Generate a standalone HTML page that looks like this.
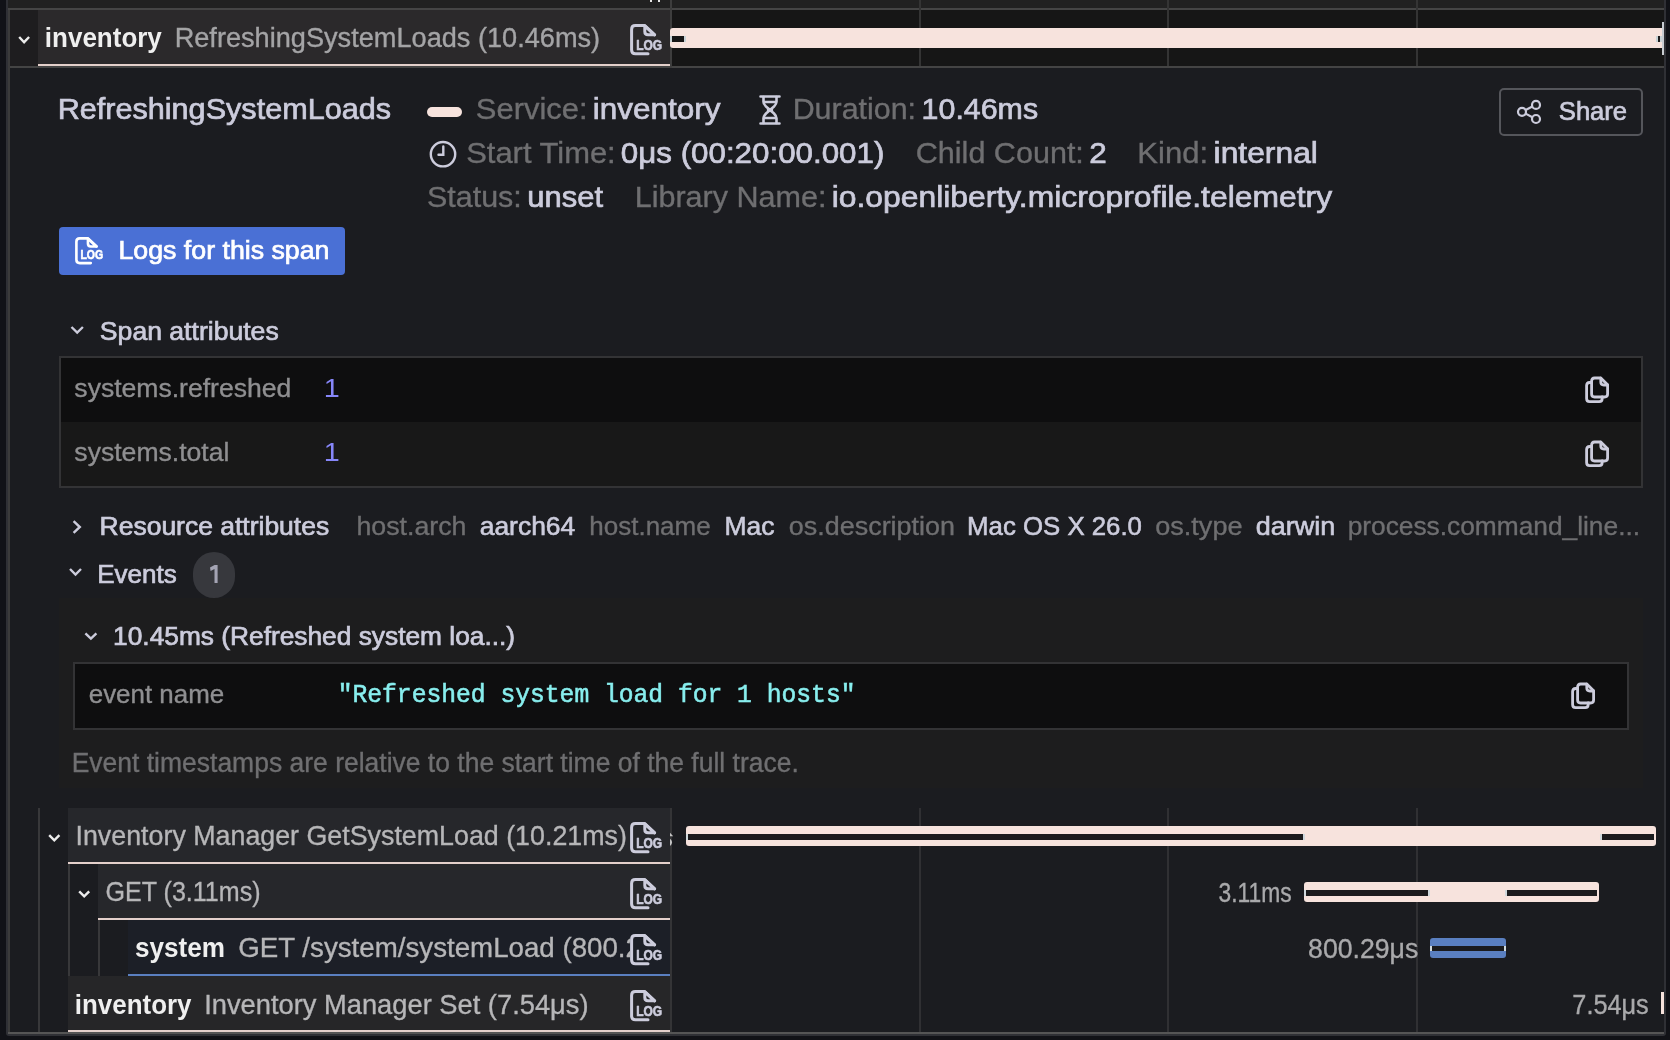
<!DOCTYPE html>
<html><head><meta charset="utf-8"><style>
html,body{margin:0;padding:0;background:#111217;overflow:hidden}
svg{display:block;will-change:transform}
</style></head><body>
<svg width="1670" height="1040" viewBox="0 0 1670 1040">
<rect x="0" y="0" width="1670" height="1040" fill="#111217" />
<rect x="6" y="-10" width="1660" height="1046" fill="#2f3035" rx="3" />
<rect x="8" y="0" width="1656" height="1034" fill="#1b1c20" />
<rect x="8" y="0" width="1656" height="8" fill="#212121" />
<rect x="8" y="10" width="2" height="1024" fill="#3b3b3b" />
<rect x="8" y="8" width="1656" height="2" fill="#454545" />
<rect x="10" y="66" width="1654" height="2" fill="#444444" />
<rect x="8" y="1032" width="1656" height="2" fill="#555555" />
<rect x="10" y="10" width="28" height="56" fill="#1e1d1f" />
<rect x="38" y="10" width="632" height="56" fill="#2b292b" />
<rect x="38" y="64" width="632" height="2" fill="#e4d0cb" />
<rect x="672" y="10" width="992" height="56" fill="#161616" />
<rect x="670" y="0" width="2" height="68" fill="#3d3d3d" />
<rect x="919" y="0" width="2" height="66" fill="#343434" />
<rect x="1167" y="0" width="2" height="66" fill="#343434" />
<rect x="1416" y="0" width="2" height="66" fill="#343434" />
<path d="M673 28 H1662 V48 H673 Q670 48 670 45 V31 Q670 28 673 28 Z" fill="#f7e3dd"/>
<rect x="670" y="36" width="2" height="6" fill="#c9d3d6" />
<rect x="672" y="36" width="12" height="6" fill="#161616" />
<rect x="684" y="36" width="2" height="6" fill="#c9d3d6" />
<rect x="1656" y="36" width="2" height="6" fill="#c9d3d6" />
<rect x="1658" y="36" width="2" height="6" fill="#1d1d1d" />
<rect x="1660" y="36" width="2" height="6" fill="#c9d3d6" />
<rect x="1662" y="22" width="2" height="33" fill="#c9cdd2" />
<rect x="650" y="0" width="2" height="2" fill="#e8e8e8" />
<rect x="658" y="0" width="2" height="2" fill="#e8e8e8" />
<path d="M19.2 37 L24.1 42.2 L29.1 37" fill="none" stroke="#ececec" stroke-width="2.4"/>
<text x="44.87" y="47.10" font-family="Liberation Sans" font-weight="bold" font-size="27" fill="#efefef" textLength="116.97" lengthAdjust="spacingAndGlyphs">inventory</text>
<text x="174.66" y="47.10" font-family="Liberation Sans" font-weight="normal" font-size="26.8" fill="#a4a4a6" stroke="#a4a4a6" stroke-width="0.35" textLength="425.51" lengthAdjust="spacingAndGlyphs">RefreshingSystemLoads (10.46ms)</text>
<g transform="translate(630,24) scale(1.0)" fill="none" stroke="#ccccdc" stroke-width="3" stroke-linecap="round" stroke-linejoin="round"><path d="M18 29.8 H5.5 Q1.6 29.8 1.6 26 V5.4 Q1.6 1.6 5.4 1.6 H14.8 L24.6 10.8"/><path d="M14.8 1.8 V7.5 Q14.8 10.8 18 10.8 H24.6 Z"/><text x="6.2" y="25.6" fill="#ccccdc" font-family="Liberation Sans" font-weight="bold" font-size="15" stroke="#ccccdc" stroke-width="0.7" textLength="26" lengthAdjust="spacingAndGlyphs">LOG</text></g>
<text x="57.65" y="118.60" font-family="Liberation Sans" font-weight="normal" font-size="29.5" fill="#ccccdc" stroke="#ccccdc" stroke-width="0.7" textLength="333.39" lengthAdjust="spacingAndGlyphs">RefreshingSystemLoads</text>
<rect x="427" y="107" width="35" height="10" fill="#f7e3dd" rx="5" />
<text x="475.87" y="118.70" font-family="Liberation Sans" font-weight="normal" font-size="29.5" fill="#6f6f71" stroke="#6f6f71" stroke-width="0.35" textLength="111.74" lengthAdjust="spacingAndGlyphs">Service:</text>
<text x="592.73" y="118.70" font-family="Liberation Sans" font-weight="normal" font-size="29.5" fill="#ccccdc" stroke="#ccccdc" stroke-width="0.7" textLength="127.89" lengthAdjust="spacingAndGlyphs">inventory</text>
<g fill="none" stroke="#ccccdc" stroke-width="2.6" stroke-linecap="round" stroke-linejoin="round"><path d="M760.5 96.5 H779.5 M760.5 123.5 H779.5"/><path d="M763.5 97 V101.5 Q763.5 104 766 106.5 L770 110 L774 106.5 Q776.5 104 776.5 101.5 V97"/><path d="M763.5 123 V118.5 Q763.5 116 766 113.5 L770 110 L774 113.5 Q776.5 116 776.5 118.5 V123"/><path d="M764 102 H776 M768 110 H772 M764 118 H776"/></g>
<text x="792.68" y="118.70" font-family="Liberation Sans" font-weight="normal" font-size="29.5" fill="#6f6f71" stroke="#6f6f71" stroke-width="0.35" textLength="123.34" lengthAdjust="spacingAndGlyphs">Duration:</text>
<text x="921.64" y="118.70" font-family="Liberation Sans" font-weight="normal" font-size="29.5" fill="#ccccdc" stroke="#ccccdc" stroke-width="0.7" textLength="116.46" lengthAdjust="spacingAndGlyphs">10.46ms</text>
<g fill="none" stroke="#ccccdc" stroke-width="2.4" stroke-linecap="round"><circle cx="443" cy="154.2" r="12.2"/><path d="M443.3 146.5 V154.8 H438.5"/></g>
<text x="466.16" y="163.00" font-family="Liberation Sans" font-weight="normal" font-size="29.5" fill="#6f6f71" stroke="#6f6f71" stroke-width="0.35" textLength="149.57" lengthAdjust="spacingAndGlyphs">Start Time:</text>
<text x="620.89" y="163.00" font-family="Liberation Sans" font-weight="normal" font-size="29.5" fill="#ccccdc" stroke="#ccccdc" stroke-width="0.7" textLength="263.45" lengthAdjust="spacingAndGlyphs">0μs (00:20:00.001)</text>
<text x="915.80" y="163.00" font-family="Liberation Sans" font-weight="normal" font-size="29.5" fill="#6f6f71" stroke="#6f6f71" stroke-width="0.35" textLength="168.06" lengthAdjust="spacingAndGlyphs">Child Count:</text>
<text x="1089.23" y="163.00" font-family="Liberation Sans" font-weight="normal" font-size="29.5" fill="#ccccdc" stroke="#ccccdc" stroke-width="0.7" textLength="17.50" lengthAdjust="spacingAndGlyphs">2</text>
<text x="1137.35" y="163.00" font-family="Liberation Sans" font-weight="normal" font-size="29.5" fill="#6f6f71" stroke="#6f6f71" stroke-width="0.35" textLength="70.80" lengthAdjust="spacingAndGlyphs">Kind:</text>
<text x="1213.59" y="163.00" font-family="Liberation Sans" font-weight="normal" font-size="29.5" fill="#ccccdc" stroke="#ccccdc" stroke-width="0.7" textLength="104.34" lengthAdjust="spacingAndGlyphs">internal</text>
<text x="427.01" y="207.20" font-family="Liberation Sans" font-weight="normal" font-size="29.5" fill="#6f6f71" stroke="#6f6f71" stroke-width="0.35" textLength="94.78" lengthAdjust="spacingAndGlyphs">Status:</text>
<text x="527.29" y="207.20" font-family="Liberation Sans" font-weight="normal" font-size="29.5" fill="#ccccdc" stroke="#ccccdc" stroke-width="0.7" textLength="75.80" lengthAdjust="spacingAndGlyphs">unset</text>
<text x="634.69" y="207.20" font-family="Liberation Sans" font-weight="normal" font-size="29.5" fill="#6f6f71" stroke="#6f6f71" stroke-width="0.35" textLength="191.71" lengthAdjust="spacingAndGlyphs">Library Name:</text>
<text x="831.74" y="207.20" font-family="Liberation Sans" font-weight="normal" font-size="29.5" fill="#ccccdc" stroke="#ccccdc" stroke-width="0.7" textLength="500.33" lengthAdjust="spacingAndGlyphs">io.openliberty.microprofile.telemetry</text>
<rect x="1500" y="89" width="142" height="46" rx="4" fill="none" stroke="#55565b" stroke-width="2"/>
<g fill="none" stroke="#ccccdc" stroke-width="2.2"><circle cx="1536" cy="104.9" r="4"/><circle cx="1522" cy="111.8" r="4"/><circle cx="1536" cy="119" r="4"/><path d="M1525.6 110 L1532.4 106.6 M1525.6 113.6 L1532.4 117.2"/></g>
<text x="1558.84" y="120.00" font-family="Liberation Sans" font-weight="normal" font-size="25.5" fill="#ccccdc" stroke="#ccccdc" stroke-width="0.7" textLength="68.23" lengthAdjust="spacingAndGlyphs">Share</text>
<rect x="59" y="227" width="286" height="48" fill="#4a70d5" rx="4" />
<g transform="translate(75,237) scale(0.875)" fill="none" stroke="#ffffff" stroke-width="3" stroke-linecap="round" stroke-linejoin="round"><path d="M18 29.8 H5.5 Q1.6 29.8 1.6 26 V5.4 Q1.6 1.6 5.4 1.6 H14.8 L24.6 10.8"/><path d="M14.8 1.8 V7.5 Q14.8 10.8 18 10.8 H24.6 Z"/><text x="6.2" y="25.6" fill="#ffffff" font-family="Liberation Sans" font-weight="bold" font-size="15" stroke="#ffffff" stroke-width="0.7" textLength="26" lengthAdjust="spacingAndGlyphs">LOG</text></g>
<text x="118.47" y="259.00" font-family="Liberation Sans" font-weight="normal" font-size="25.6" fill="#ffffff" stroke="#ffffff" stroke-width="0.7" textLength="210.98" lengthAdjust="spacingAndGlyphs">Logs for this span</text>
<path d="M71.5 327 L77.2 332.6 L82.9 327" fill="none" stroke="#ccccdc" stroke-width="2.4"/>
<text x="99.87" y="340.20" font-family="Liberation Sans" font-weight="normal" font-size="26.4" fill="#ccccdc" stroke="#ccccdc" stroke-width="0.7" textLength="178.85" lengthAdjust="spacingAndGlyphs">Span attributes</text>
<rect x="59" y="356" width="1584" height="132" fill="#333335" />
<rect x="61" y="358" width="1580" height="64" fill="#0e0e0f" />
<rect x="61" y="422" width="1580" height="64" fill="#181818" />
<text x="74.36" y="397.20" font-family="Liberation Sans" font-weight="normal" font-size="25.8" fill="#8f8f91" stroke="#8f8f91" stroke-width="0.35" textLength="216.88" lengthAdjust="spacingAndGlyphs">systems.refreshed</text>
<text x="323.80" y="397.20" font-family="Liberation Sans" font-weight="normal" font-size="26.5" fill="#8686f8" textLength="16.03" lengthAdjust="spacingAndGlyphs">1</text>
<text x="74.35" y="461.20" font-family="Liberation Sans" font-weight="normal" font-size="25.8" fill="#8f8f91" stroke="#8f8f91" stroke-width="0.35" textLength="155.11" lengthAdjust="spacingAndGlyphs">systems.total</text>
<text x="323.80" y="461.20" font-family="Liberation Sans" font-weight="normal" font-size="26.5" fill="#8686f8" textLength="16.03" lengthAdjust="spacingAndGlyphs">1</text>
<g transform="translate(1584,376)" fill="none" stroke="#ccccdc" stroke-width="2.8" stroke-linecap="round" stroke-linejoin="round"><path d="M7.5 6.5 H5.5 Q2.6 6.5 2.6 9.5 V22.5 Q2.6 25.6 5.6 25.6 H15.2 Q18.2 25.6 18.2 22.5 V21"/><path d="M10.5 21 Q7.6 21 7.6 18 V5 Q7.6 2 10.6 2 H16.8 L23.6 8.8 V18 Q23.6 21 20.6 21 Z"/><path d="M16.8 2.2 V6 Q16.8 9 19.8 9 H23.4"/></g>
<g transform="translate(1584,440)" fill="none" stroke="#ccccdc" stroke-width="2.8" stroke-linecap="round" stroke-linejoin="round"><path d="M7.5 6.5 H5.5 Q2.6 6.5 2.6 9.5 V22.5 Q2.6 25.6 5.6 25.6 H15.2 Q18.2 25.6 18.2 22.5 V21"/><path d="M10.5 21 Q7.6 21 7.6 18 V5 Q7.6 2 10.6 2 H16.8 L23.6 8.8 V18 Q23.6 21 20.6 21 Z"/><path d="M16.8 2.2 V6 Q16.8 9 19.8 9 H23.4"/></g>
<path d="M73.6 521.2 L79.8 527 L73.6 532.8" fill="none" stroke="#ccccdc" stroke-width="2.4"/>
<text x="99.57" y="535.20" font-family="Liberation Sans" font-weight="normal" font-size="26" fill="#ccccdc" stroke="#ccccdc" stroke-width="0.7" textLength="229.61" lengthAdjust="spacingAndGlyphs">Resource attributes</text>
<text x="356.51" y="535.20" font-family="Liberation Sans" font-weight="normal" font-size="26" fill="#6f6f71" stroke="#6f6f71" stroke-width="0.35" textLength="109.99" lengthAdjust="spacingAndGlyphs">host.arch</text>
<text x="479.70" y="535.20" font-family="Liberation Sans" font-weight="normal" font-size="26" fill="#ccccdc" stroke="#ccccdc" stroke-width="0.6" textLength="95.58" lengthAdjust="spacingAndGlyphs">aarch64</text>
<text x="589.27" y="535.20" font-family="Liberation Sans" font-weight="normal" font-size="26" fill="#6f6f71" stroke="#6f6f71" stroke-width="0.35" textLength="121.43" lengthAdjust="spacingAndGlyphs">host.name</text>
<text x="724.47" y="535.20" font-family="Liberation Sans" font-weight="normal" font-size="26" fill="#ccccdc" stroke="#ccccdc" stroke-width="0.6" textLength="50.00" lengthAdjust="spacingAndGlyphs">Mac</text>
<text x="788.86" y="535.20" font-family="Liberation Sans" font-weight="normal" font-size="26" fill="#6f6f71" stroke="#6f6f71" stroke-width="0.35" textLength="166.11" lengthAdjust="spacingAndGlyphs">os.description</text>
<text x="967.11" y="535.20" font-family="Liberation Sans" font-weight="normal" font-size="26" fill="#ccccdc" stroke="#ccccdc" stroke-width="0.6" textLength="174.84" lengthAdjust="spacingAndGlyphs">Mac OS X 26.0</text>
<text x="1155.30" y="535.20" font-family="Liberation Sans" font-weight="normal" font-size="26" fill="#6f6f71" stroke="#6f6f71" stroke-width="0.35" textLength="87.16" lengthAdjust="spacingAndGlyphs">os.type</text>
<text x="1255.67" y="535.20" font-family="Liberation Sans" font-weight="normal" font-size="26" fill="#ccccdc" stroke="#ccccdc" stroke-width="0.6" textLength="79.66" lengthAdjust="spacingAndGlyphs">darwin</text>
<text x="1347.66" y="535.20" font-family="Liberation Sans" font-weight="normal" font-size="26" fill="#6f6f71" stroke="#6f6f71" stroke-width="0.35" textLength="292.41" lengthAdjust="spacingAndGlyphs">process.command_line...</text>
<path d="M70 569 L75.5 574.6 L81 569" fill="none" stroke="#ccccdc" stroke-width="2.4"/>
<text x="97.23" y="582.80" font-family="Liberation Sans" font-weight="normal" font-size="26" fill="#ccccdc" stroke="#ccccdc" stroke-width="0.7" textLength="79.57" lengthAdjust="spacingAndGlyphs">Events</text>
<rect x="193" y="552" width="42" height="46" fill="#37383d" rx="21" />
<path d="M210 567.6 L214.6 565 H217.6 V583 H214.5 V568.9 L210.6 571 Z" fill="#a4a4b4"/>
<rect x="59" y="598" width="1584" height="190" fill="#1d1d1e" />
<path d="M85.4 633.4 L90.9 638.7 L96.4 633.4" fill="none" stroke="#ccccdc" stroke-width="2.4"/>
<text x="113.09" y="644.80" font-family="Liberation Sans" font-weight="normal" font-size="26" fill="#ccccdc" stroke="#ccccdc" stroke-width="0.7" textLength="402.01" lengthAdjust="spacingAndGlyphs">10.45ms (Refreshed system loa...)</text>
<rect x="73" y="662" width="1556" height="68" fill="#333335" />
<rect x="75" y="664" width="1552" height="64" fill="#0e0e0f" />
<text x="88.74" y="703.30" font-family="Liberation Sans" font-weight="normal" font-size="25.8" fill="#8f8f91" stroke="#8f8f91" stroke-width="0.35" textLength="135.42" lengthAdjust="spacingAndGlyphs">event name</text>
<text x="337.69" y="702.40" font-family="Liberation Mono" font-weight="normal" font-size="26" fill="#88eeee" stroke="#88eeee" stroke-width="0.55" textLength="517.79" lengthAdjust="spacingAndGlyphs">&quot;Refreshed system load for 1 hosts&quot;</text>
<g transform="translate(1570,682)" fill="none" stroke="#ccccdc" stroke-width="2.8" stroke-linecap="round" stroke-linejoin="round"><path d="M7.5 6.5 H5.5 Q2.6 6.5 2.6 9.5 V22.5 Q2.6 25.6 5.6 25.6 H15.2 Q18.2 25.6 18.2 22.5 V21"/><path d="M10.5 21 Q7.6 21 7.6 18 V5 Q7.6 2 10.6 2 H16.8 L23.6 8.8 V18 Q23.6 21 20.6 21 Z"/><path d="M16.8 2.2 V6 Q16.8 9 19.8 9 H23.4"/></g>
<text x="71.69" y="771.50" font-family="Liberation Sans" font-weight="normal" font-size="27" fill="#6f6f71" stroke="#6f6f71" stroke-width="0.35" textLength="727.13" lengthAdjust="spacingAndGlyphs">Event timestamps are relative to the start time of the full trace.</text>
<rect x="670" y="808" width="2" height="224" fill="#343436" />
<rect x="919" y="808" width="2" height="224" fill="#303033" />
<rect x="1167" y="808" width="2" height="224" fill="#303033" />
<rect x="1416" y="808" width="2" height="224" fill="#303033" />
<rect x="38" y="808" width="2" height="224" fill="#38383a" />
<rect x="68" y="808" width="602" height="56" fill="#26272b" />
<rect x="68" y="862" width="602" height="2" fill="#e4d0cb" />
<path d="M49.2 835.2 L54.3 840.4 L59.4 835.2" fill="none" stroke="#ececec" stroke-width="2.4"/>
<text x="75.52" y="845.20" font-family="Liberation Sans" font-weight="normal" font-size="27.5" fill="#b6b6b8" stroke="#b6b6b8" stroke-width="0.35" textLength="551.36" lengthAdjust="spacingAndGlyphs">Inventory Manager GetSystemLoad (10.21ms)</text>
<g transform="translate(630,822) scale(1.0)" fill="none" stroke="#ccccdc" stroke-width="3" stroke-linecap="round" stroke-linejoin="round"><path d="M18 29.8 H5.5 Q1.6 29.8 1.6 26 V5.4 Q1.6 1.6 5.4 1.6 H14.8 L24.6 10.8"/><path d="M14.8 1.8 V7.5 Q14.8 10.8 18 10.8 H24.6 Z"/><text x="6.2" y="25.6" fill="#ccccdc" font-family="Liberation Sans" font-weight="bold" font-size="15" stroke="#ccccdc" stroke-width="0.7" textLength="26" lengthAdjust="spacingAndGlyphs">LOG</text></g>
<rect x="686" y="826" width="970" height="20" fill="#f7e3dd" rx="3" />
<path d="M670 832.8 L673.2 836.2 H670 Z M670 838.8 Q674.2 842.4 670 846 Z" fill="#c4c4c4"/>
<rect x="686" y="834" width="2" height="6" fill="#cfd8dc" />
<rect x="688" y="834" width="615" height="6" fill="#1b1b1d" />
<rect x="1303" y="834" width="2" height="6" fill="#cfd8dc" />
<rect x="1600" y="834" width="2" height="6" fill="#cfd8dc" />
<rect x="1602" y="834" width="52" height="6" fill="#1b1b1d" />
<rect x="68" y="864" width="2" height="112" fill="#38383a" />
<rect x="98" y="864" width="572" height="56" fill="#26272b" />
<rect x="98" y="918" width="572" height="2" fill="#e4d0cb" />
<path d="M79.2 891.3 L84.2 896.4 L89.2 891.3" fill="none" stroke="#ececec" stroke-width="2.4"/>
<text x="105.57" y="901.40" font-family="Liberation Sans" font-weight="normal" font-size="27.5" fill="#b6b6b8" stroke="#b6b6b8" stroke-width="0.35" textLength="154.94" lengthAdjust="spacingAndGlyphs">GET (3.11ms)</text>
<g transform="translate(630,878) scale(1.0)" fill="none" stroke="#ccccdc" stroke-width="3" stroke-linecap="round" stroke-linejoin="round"><path d="M18 29.8 H5.5 Q1.6 29.8 1.6 26 V5.4 Q1.6 1.6 5.4 1.6 H14.8 L24.6 10.8"/><path d="M14.8 1.8 V7.5 Q14.8 10.8 18 10.8 H24.6 Z"/><text x="6.2" y="25.6" fill="#ccccdc" font-family="Liberation Sans" font-weight="bold" font-size="15" stroke="#ccccdc" stroke-width="0.7" textLength="26" lengthAdjust="spacingAndGlyphs">LOG</text></g>
<text x="1218.59" y="901.70" font-family="Liberation Sans" font-weight="normal" font-size="27" fill="#a9a9ab" stroke="#a9a9ab" stroke-width="0.35" textLength="73.12" lengthAdjust="spacingAndGlyphs">3.11ms</text>
<rect x="1304" y="882" width="295" height="20" fill="#f7e3dd" rx="3" />
<rect x="1304" y="890" width="2" height="6" fill="#cfd8dc" />
<rect x="1306" y="890" width="122" height="6" fill="#1b1b1d" />
<rect x="1428" y="890" width="2" height="6" fill="#cfd8dc" />
<rect x="1505" y="890" width="2" height="6" fill="#cfd8dc" />
<rect x="1507" y="890" width="90" height="6" fill="#1b1b1d" />
<rect x="98" y="920" width="2" height="56" fill="#38383a" />
<rect x="128" y="920" width="542" height="56" fill="#1c1f27" />
<rect x="128" y="974" width="542" height="2" fill="#5a7fc0" />
<text x="135.00" y="957.20" font-family="Liberation Sans" font-weight="bold" font-size="27.5" fill="#efefef" textLength="89.99" lengthAdjust="spacingAndGlyphs">system</text>
<clipPath id="c4"><rect x="128" y="920" width="502" height="56"/></clipPath><g clip-path="url(#c4)">
<text x="238.26" y="957.20" font-family="Liberation Sans" font-weight="normal" font-size="27.5" fill="#b6b6b8" stroke="#b6b6b8" stroke-width="0.35" textLength="457.13" lengthAdjust="spacingAndGlyphs">GET /system/systemLoad (800.29μs)</text>
</g>
<g transform="translate(630,934) scale(1.0)" fill="none" stroke="#ccccdc" stroke-width="3" stroke-linecap="round" stroke-linejoin="round"><path d="M18 29.8 H5.5 Q1.6 29.8 1.6 26 V5.4 Q1.6 1.6 5.4 1.6 H14.8 L24.6 10.8"/><path d="M14.8 1.8 V7.5 Q14.8 10.8 18 10.8 H24.6 Z"/><text x="6.2" y="25.6" fill="#ccccdc" font-family="Liberation Sans" font-weight="bold" font-size="15" stroke="#ccccdc" stroke-width="0.7" textLength="26" lengthAdjust="spacingAndGlyphs">LOG</text></g>
<text x="1308.08" y="957.70" font-family="Liberation Sans" font-weight="normal" font-size="27" fill="#a9a9ab" stroke="#a9a9ab" stroke-width="0.35" textLength="110.18" lengthAdjust="spacingAndGlyphs">800.29μs</text>
<rect x="1430" y="938" width="76" height="20" fill="#5a7fc0" rx="3" />
<rect x="1430" y="946" width="2" height="5" fill="#cfd8dc" />
<rect x="1432" y="946" width="72" height="5" fill="#1b1b1d" />
<rect x="1504" y="946" width="2" height="5" fill="#cfd8dc" />
<rect x="68" y="976" width="602" height="56" fill="#262628" />
<rect x="68" y="1030" width="602" height="2" fill="#e4d0cb" />
<text x="74.83" y="1013.70" font-family="Liberation Sans" font-weight="bold" font-size="27" fill="#efefef" textLength="116.62" lengthAdjust="spacingAndGlyphs">inventory</text>
<text x="204.17" y="1013.70" font-family="Liberation Sans" font-weight="normal" font-size="27.5" fill="#b6b6b8" stroke="#b6b6b8" stroke-width="0.35" textLength="384.40" lengthAdjust="spacingAndGlyphs">Inventory Manager Set (7.54μs)</text>
<g transform="translate(630,990) scale(1.0)" fill="none" stroke="#ccccdc" stroke-width="3" stroke-linecap="round" stroke-linejoin="round"><path d="M18 29.8 H5.5 Q1.6 29.8 1.6 26 V5.4 Q1.6 1.6 5.4 1.6 H14.8 L24.6 10.8"/><path d="M14.8 1.8 V7.5 Q14.8 10.8 18 10.8 H24.6 Z"/><text x="6.2" y="25.6" fill="#ccccdc" font-family="Liberation Sans" font-weight="bold" font-size="15" stroke="#ccccdc" stroke-width="0.7" textLength="26" lengthAdjust="spacingAndGlyphs">LOG</text></g>
<text x="1572.36" y="1014.00" font-family="Liberation Sans" font-weight="normal" font-size="27" fill="#a9a9ab" stroke="#a9a9ab" stroke-width="0.35" textLength="76.34" lengthAdjust="spacingAndGlyphs">7.54μs</text>
<rect x="1661" y="992" width="3" height="22" fill="#f7e3dd" />
</svg></body></html>
